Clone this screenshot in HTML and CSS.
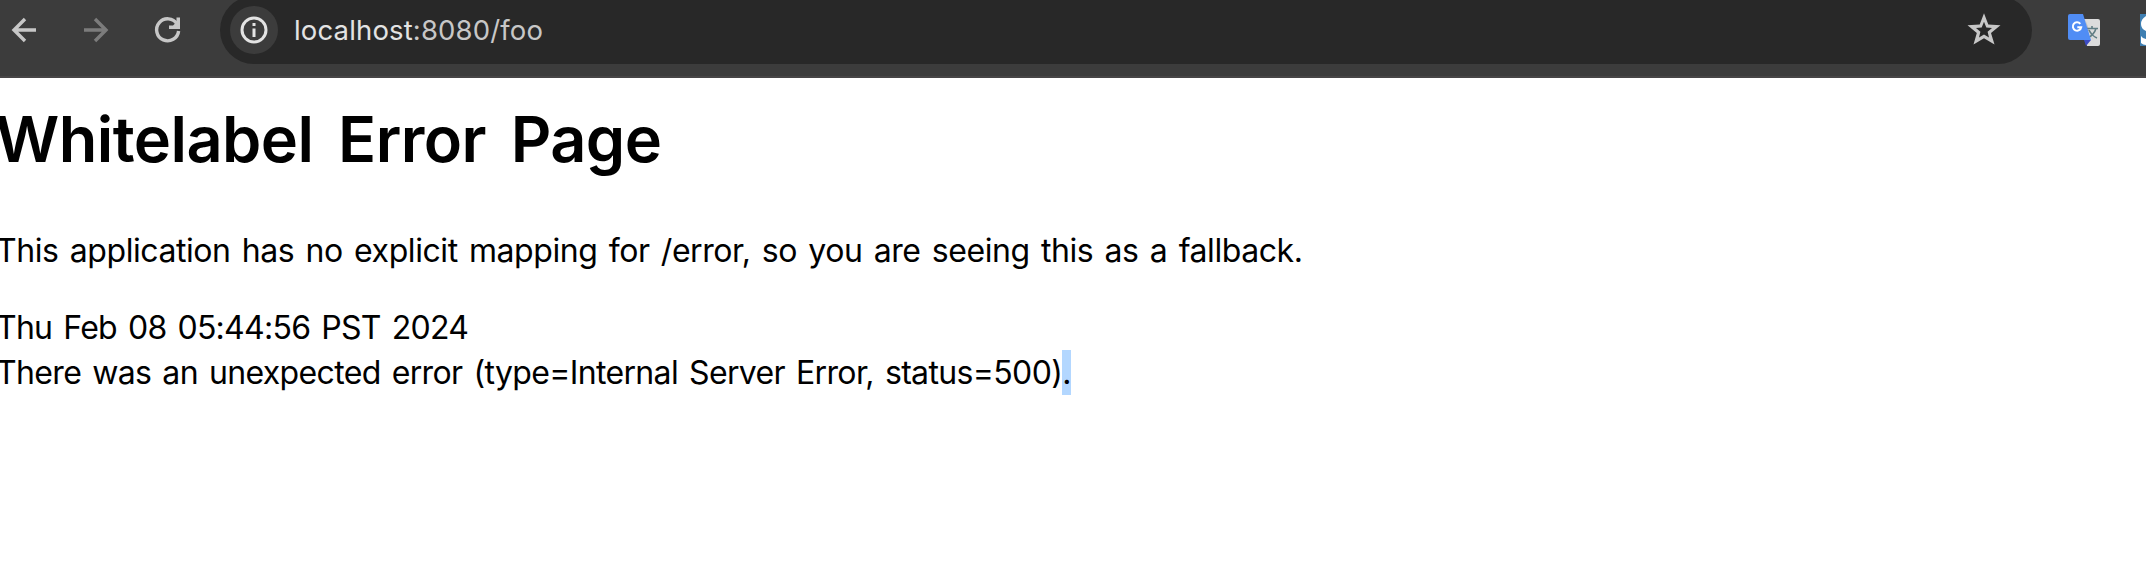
FILE: index.html
```html
<!DOCTYPE html>
<html lang="en">
<head>
<meta charset="utf-8">
<title>Whitelabel Error Page</title>
<link rel="stylesheet" href="styles.css">
</head>
<body>
<header class="toolbar">
  <svg class="icon back" viewBox="0 0 32 32"><path d="M30 16H9M19 5 8 16 19 27"/></svg>
  <svg class="icon forward" viewBox="0 0 32 32"><path d="M2 16H23M13 5 24 16 13 27"/></svg>
  <svg class="icon reload" viewBox="0 0 32 32"><path d="M26.6 17A11 11 0 1 1 25 10"/><path class="solid" d="M24.5 3.500H28V15H17V11.500H21L24.500 8Z"/></svg>
  <div class="omnibox">
    <span class="info"><svg viewBox="0 0 48 48"><circle cx="24" cy="24" r="12"/><path d="M24 22.500V31M24 17V20"/></svg></span>
    <span class="url">localhost<span class="path">:8080/foo</span></span>
    <svg class="star" viewBox="0 0 34 34"><path fill-rule="evenodd" d="M17 0.300 21.300 11.600 33.500 12.200 24 20 27.500 31.500 17 25.200 6.500 31.500 9.800 20 0.500 12.200 12.700 11.600ZM17 8.800 14.700 14.500 9 15 13.400 18.700 12 24.500 17 21.400 22 24.500 20.600 18.700 25 15 19.300 14.500Z"/></svg>
  </div>
  <svg class="translate" viewBox="0 0 32 32">
    <path fill="#dcdcdc" d="M15 5H30Q32 5 32 7V30Q32 32 30 32H19Z"/>
    <path fill="#bcbcbc" d="M17 5 25 26 19 14Z"/>
    <path fill="none" stroke="#607d83" stroke-width="1.600" d="M19 14.500H30M24 12V15M28 14.500Q26 21 19.500 24M21 16Q24 22 29 24"/>
    <path fill="#3c4bc4" d="M16 26H23L18 32Z"/>
    <path fill="#508df5" d="M2 0H15L23 26H2Q0 26 0 24V2Q0 0 2 0Z"/>
    <path fill="none" stroke="#fff" stroke-width="2" d="M12.300 9.800A4.200 4.200 0 1 0 13.200 13.300H9.300"/>
  </svg>
  <svg class="extension" viewBox="0 0 6 32"><path fill="#3f7fb2" d="M0 0H6V32H0Z"/><path fill="#fff" d="M6 2Q1 5 1 10Q1 15 6 17ZM1 22Q3 25 6 25V31Q3 31 1 29Z"/></svg>
</header>
<main class="page">
  <h1 class="title">Whitelabel Error Page</h1>
  <p class="message">This application has no explicit mapping for /error, so you are seeing this as a fallback.</p>
  <div class="time">Thu Feb 08 05:44:56 PST 2024</div>
  <div class="detail">There was an unexpected error (type=Internal Server Error, status=500)<span class="selected">.</span></div>
</main>
</body>
</html>
```
FILE: styles.css
```css
body {
  margin: 0;
  background: #fff;
  color: #000;
  font-family: Inter, "Liberation Sans", sans-serif;
  overflow: hidden;
}
.toolbar {
  box-sizing: border-box;
  display: flex;
  align-items: flex-start;
  height: 78px;
  background: #3c3c3c;
  border-bottom: 2px solid #474546;
  overflow: hidden;
}
.icon {
  flex: none;
  width: 32px;
  height: 32px;
  margin-top: 14px;
  fill: none;
  stroke: #c7c7c7;
  stroke-width: 3.4;
}
.back { margin-left: 6px; }
.forward { margin-left: 44px; stroke: #7c7c7c; }
.reload { margin-left: 38px; }
.solid { fill: #c7c7c7; stroke: none; }
.omnibox {
  box-sizing: border-box;
  flex: none;
  display: flex;
  align-items: center;
  width: 1812px;
  height: 68px;
  margin: -4px 0 0 36px;
  padding: 0 31px 0 10px;
  border-radius: 34px;
  background: #282828;
}
.info {
  width: 48px;
  height: 48px;
  border-radius: 50%;
  background: #3c3c3c;
}
.info svg {
  display: block;
  fill: none;
  stroke: #e3e3e3;
  stroke-width: 3;
}
.url {
  margin-left: 16px;
  font-size: 27.5px;
  line-height: 40px;
  letter-spacing: 0.15px;
  color: #e3e3e3;
}
.path { color: #c7c7c7; }
.star {
  width: 34px;
  height: 34px;
  margin-left: auto;
  fill: #c7c7c7;
}
.translate {
  flex: none;
  width: 32px;
  height: 32px;
  margin: 14px 0 0 36px;
}
.extension {
  flex: none;
  width: 6px;
  height: 32px;
  margin: 14px 0 0 40px;
}
.page {
  margin-left: -4px;
  padding-top: 17px;
  font-size: 32px;
  line-height: 45px;
  word-spacing: 2.7px;
  white-space: nowrap;
}
.title {
  margin: 0 0 0 -1px;
  font-size: 63px;
  font-weight: 600;
  line-height: 88px;
  letter-spacing: -0.55px;
  word-spacing: 9.3px;
}
.message {
  margin: 45px 0 32px;
  letter-spacing: -0.43px;
}
.time { letter-spacing: -0.73px; }
.detail { letter-spacing: -0.65px; }
.selected {
  display: inline-block;
  background: #b3d7ff;
}
```
